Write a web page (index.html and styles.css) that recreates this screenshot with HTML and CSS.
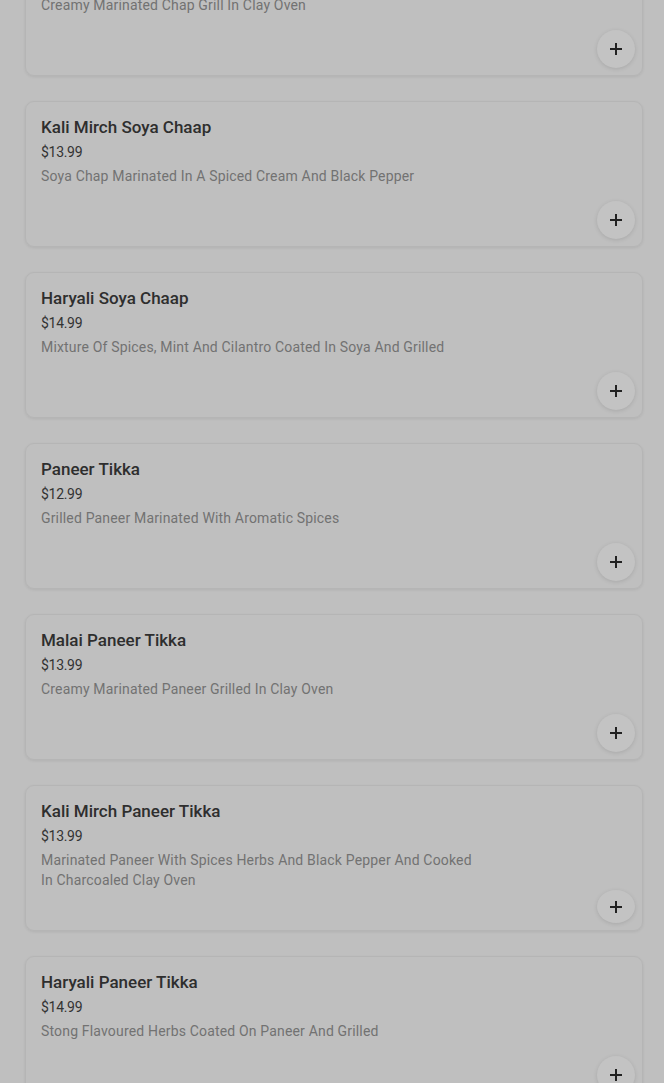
FILE: index.html
```html
<!DOCTYPE html>
<html lang="en">
<head>
    <meta charset="UTF-8">
    <meta name="viewport" content="width=device-width, initial-scale=1.0">
    <title>Menu</title>
    <link rel="stylesheet" href="styles.css">
</head>
<body>
    <div class="menu-list">
        <div class="menu-card">
            <h3 class="item-name">Malai Soya Chaap</h3>
            <div class="item-price">$13.99</div>
            <p class="item-desc">Creamy Marinated Chap Grill In Clay Oven</p>
            <button class="add-btn" title="Add"><span class="plus"></span></button>
        </div>
        <div class="menu-card">
            <h3 class="item-name">Kali Mirch Soya Chaap</h3>
            <div class="item-price">$13.99</div>
            <p class="item-desc">Soya Chap Marinated In A Spiced Cream And Black Pepper</p>
            <button class="add-btn" title="Add"><span class="plus"></span></button>
        </div>
        <div class="menu-card">
            <h3 class="item-name">Haryali Soya Chaap</h3>
            <div class="item-price">$14.99</div>
            <p class="item-desc">Mixture Of Spices, Mint And Cilantro Coated In Soya And Grilled</p>
            <button class="add-btn" title="Add"><span class="plus"></span></button>
        </div>
        <div class="menu-card">
            <h3 class="item-name">Paneer Tikka</h3>
            <div class="item-price">$12.99</div>
            <p class="item-desc">Grilled Paneer Marinated With Aromatic Spices</p>
            <button class="add-btn" title="Add"><span class="plus"></span></button>
        </div>
        <div class="menu-card">
            <h3 class="item-name">Malai Paneer Tikka</h3>
            <div class="item-price">$13.99</div>
            <p class="item-desc">Creamy Marinated Paneer Grilled In Clay Oven</p>
            <button class="add-btn" title="Add"><span class="plus"></span></button>
        </div>
        <div class="menu-card">
            <h3 class="item-name">Kali Mirch Paneer Tikka</h3>
            <div class="item-price">$13.99</div>
            <p class="item-desc">Marinated Paneer With Spices Herbs And Black Pepper And Cooked In Charcoaled Clay Oven</p>
            <button class="add-btn" title="Add"><span class="plus"></span></button>
        </div>
        <div class="menu-card">
            <h3 class="item-name">Haryali Paneer Tikka</h3>
            <div class="item-price">$14.99</div>
            <p class="item-desc">Stong Flavoured Herbs Coated On Paneer And Grilled</p>
            <button class="add-btn" title="Add"><span class="plus"></span></button>
        </div>
    </div>
</body>
</html>
```

FILE: styles.css
```css
body {
    margin: 0;
    padding: 0;
    background-color: #bfbfbf;
    font-family: Roboto, "Liberation Sans", sans-serif;
    overflow: hidden;
}

/* list is scrolled, first card is cut at the top */
.menu-list {
    display: flex;
    flex-direction: column;
    gap: 25px;
    padding: 0 21px 0 25px;
    margin-top: -70px;
}

.menu-card {
    height: 146px;
    box-sizing: border-box;
    padding: 14px 7px 7px 15px;
    border: 1px solid #b5b5b5;
    border-radius: 9px;
    box-shadow: 0 1px 3px rgba(0, 0, 0, 0.08);
    display: flex;
    flex-direction: column;
}

.item-name {
    margin: 0;
    font-size: 17px;
    font-weight: 500;
    line-height: 22px;
    color: #2e2e2e;
}

.item-price {
    margin-top: 4px;
    font-size: 14px;
    line-height: 20px;
    letter-spacing: -0.3px;
    color: #333;
}

.item-desc {
    margin: 4px 0 0;
    max-width: 440px;
    font-size: 14px;
    line-height: 20px;
    letter-spacing: 0.17px;
    color: #727272;
}

.add-btn {
    margin-top: auto;
    align-self: flex-end;
    width: 38px;
    height: 38px;
    border: none;
    border-radius: 50%;
    background-color: #c3c3c3;
    box-shadow: 0 1px 4px rgba(0, 0, 0, 0.12);
    display: flex;
    justify-content: center;
    align-items: center;
    cursor: pointer;
    padding: 0;
}

.plus {
    position: relative;
    width: 12px;
    height: 12px;
}

.plus::before,
.plus::after {
    content: "";
    position: absolute;
    background-color: #222;
}

.plus::before {
    left: 0;
    top: 5px;
    width: 12px;
    height: 2px;
}

.plus::after {
    left: 5px;
    top: 0;
    width: 2px;
    height: 12px;
}
```
